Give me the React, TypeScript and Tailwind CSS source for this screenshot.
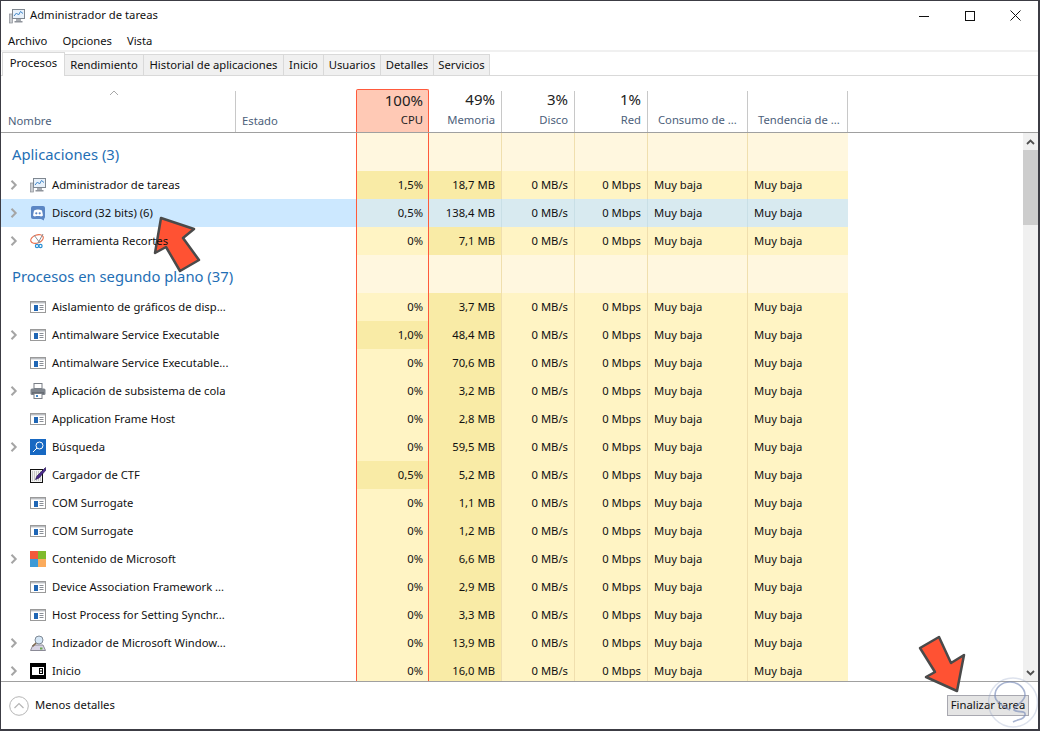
import { FC } from "react";

type Row = {
  name: string;
  icon: string;
  expand?: boolean;
  cpu: string;
  mem: string;
  cpuHot?: boolean;
  selected?: boolean;
};

const apps: Row[] = [
  { name: "Administrador de tareas", icon: "taskmgr", expand: true, cpu: "1,5%", mem: "18,7 MB", cpuHot: true },
  { name: "Discord (32 bits) (6)", icon: "discord", expand: true, cpu: "0,5%", mem: "138,4 MB", selected: true },
  { name: "Herramienta Recortes", icon: "snip", expand: true, cpu: "0%", mem: "7,1 MB" },
];

const background: Row[] = [
  { name: "Aislamiento de gráficos de disp...", icon: "proc", cpu: "0%", mem: "3,7 MB" },
  { name: "Antimalware Service Executable", icon: "proc", expand: true, cpu: "1,0%", mem: "48,4 MB", cpuHot: true },
  { name: "Antimalware Service Executable...", icon: "proc", cpu: "0%", mem: "70,6 MB" },
  { name: "Aplicación de subsistema de cola", icon: "printer", expand: true, cpu: "0%", mem: "3,2 MB" },
  { name: "Application Frame Host", icon: "proc", cpu: "0%", mem: "2,8 MB" },
  { name: "Búsqueda", icon: "search", expand: true, cpu: "0%", mem: "59,5 MB" },
  { name: "Cargador de CTF", icon: "ctf", cpu: "0,5%", mem: "5,2 MB", cpuHot: true },
  { name: "COM Surrogate", icon: "proc", cpu: "0%", mem: "1,1 MB" },
  { name: "COM Surrogate", icon: "proc", cpu: "0%", mem: "1,2 MB" },
  { name: "Contenido de Microsoft", icon: "ms", expand: true, cpu: "0%", mem: "6,6 MB" },
  { name: "Device Association Framework ...", icon: "proc", cpu: "0%", mem: "2,9 MB" },
  { name: "Host Process for Setting Synchr...", icon: "proc", cpu: "0%", mem: "3,3 MB" },
  { name: "Indizador de Microsoft Window...", icon: "indexer", expand: true, cpu: "0%", mem: "13,9 MB" },
  { name: "Inicio", icon: "start", expand: true, cpu: "0%", mem: "16,0 MB" },
];

const ProcIcon: FC<{ name: string }> = ({ name }) => {
  if (name === "discord")
    return (
      <svg width="16" height="16" viewBox="0 0 16 16">
        <rect x="1" y="1" width="14" height="13" rx="2" fill="#5b86c4" />
        <path d="M4 5.5 Q8 3.5 12 5.5 L13 10.5 Q11 12 10 11 L6 11 Q5 12 3 10.5Z" fill="#fff" />
        <circle cx="6.3" cy="8.3" r="1.1" fill="#5b86c4" />
        <circle cx="9.7" cy="8.3" r="1.1" fill="#5b86c4" />
        <path d="M11 14l3 1.5V13z" fill="#5b86c4" />
      </svg>
    );
  if (name === "taskmgr")
    return (
      <svg width="16" height="16" viewBox="0 0 16 16">
        <rect x="0.5" y="6" width="3" height="9" fill="#c9ccd0" stroke="#8a8f96" strokeWidth="0.7" />
        <rect x="3.5" y="1.5" width="12" height="9" fill="#e8f1fa" stroke="#7f8790" />
        <path d="M5 8l2.5-3 2 2 2-3.5 2.5 2" fill="none" stroke="#3f86c9" />
        <rect x="7" y="11" width="5" height="2" fill="#a9adb3" />
        <rect x="5.5" y="13" width="8" height="1.5" fill="#8f949b" />
      </svg>
    );
  if (name === "snip")
    return (
      <svg width="16" height="16" viewBox="0 0 16 16">
        <ellipse cx="7" cy="6" rx="6.5" ry="4" fill="#fff" stroke="#e8704e" strokeWidth="1.1" transform="rotate(-20 7 6)" />
        <path d="M4 2l6 8M13 1L8 10" stroke="#8a8f96" />
        <circle cx="10.5" cy="13" r="1.6" fill="none" stroke="#2a8fd4" strokeWidth="1.2" />
        <circle cx="7" cy="13" r="1.6" fill="none" stroke="#2a8fd4" strokeWidth="1.2" />
      </svg>
    );
  if (name === "printer")
    return (
      <svg width="16" height="16" viewBox="0 0 16 16">
        <rect x="4" y="0.5" width="8" height="5" fill="#fff" stroke="#7a7f86" />
        <rect x="0.5" y="5.5" width="15" height="6.5" rx="1.5" fill="#7f858d" />
        <rect x="2" y="9.5" width="12" height="1" fill="#50555c" />
        <rect x="4" y="10.5" width="8" height="5" fill="#fff" stroke="#7a7f86" />
        <rect x="6" y="12" width="2" height="2" fill="#3f86c9" />
      </svg>
    );
  if (name === "search")
    return (
      <svg width="16" height="16" viewBox="0 0 16 16">
        <rect width="16" height="16" fill="#1768c2" />
        <circle cx="9.5" cy="6.5" r="3.5" fill="none" stroke="#fff" />
        <path d="M7 9l-4 4" stroke="#fff" />
      </svg>
    );
  if (name === "ctf")
    return (
      <svg width="16" height="16" viewBox="0 0 16 16">
        <rect x="0.5" y="2.5" width="12" height="13" fill="#f2f2f2" stroke="#111" />
        <path d="M2 5h9M2 7h9M2 9h9M2 11h9M2 13h9" stroke="#9a9a9a" strokeDasharray="1 1" />
        <path d="M15.5 0.5L7 9l-1.5 3.5L9 11l7-8z" fill="#4b2a8c" stroke="#1d1145" strokeWidth="0.6" />
      </svg>
    );
  if (name === "ms")
    return (
      <svg width="16" height="16" viewBox="0 0 16 16">
        <rect width="8" height="8" fill="#f25a3c" />
        <rect x="8" width="8" height="8" fill="#7fba2c" />
        <rect y="8" width="8" height="8" fill="#3d9ad6" />
        <rect x="8" y="8" width="8" height="8" fill="#fbab5c" />
      </svg>
    );
  if (name === "indexer")
    return (
      <svg width="16" height="16" viewBox="0 0 16 16">
        <path d="M0.5 15.5L3 10h10l2.5 5.5z" fill="#d8d4e4" stroke="#8b8a96" />
        <rect x="10" y="12.5" width="2.5" height="2" fill="#6aa84f" />
        <circle cx="9" cy="5" r="4" fill="#d5e6f5" stroke="#7f8a96" />
        <path d="M6 8l-3.5 3.5" stroke="#7f6a50" strokeWidth="1.6" />
      </svg>
    );
  if (name === "start")
    return (
      <svg width="16" height="16" viewBox="0 0 16 16">
        <rect width="16" height="16" fill="#000" />
        <rect x="2" y="4" width="12" height="8" fill="#fff" />
        <rect x="9" y="5" width="4" height="6" fill="#000" />
        <path d="M10 6.5h2M10 8h2M10 9.5h2" stroke="#fff" />
      </svg>
    );
  return (
    <svg width="16" height="16" viewBox="0 0 16 16">
      <rect x="0.5" y="2.5" width="15" height="11" fill="#fff" stroke="#9a9a9a" />
      <rect x="1" y="3" width="14" height="1.4" fill="#b9bcc0" />
      <rect x="4" y="6" width="4" height="6" fill="#1f66b5" />
      <path d="M9.5 6.5h4M9.5 8.5h4M9.5 10.5h4" stroke="#8a8f96" />
    </svg>
  );
};

const Chevron: FC = () => (
  <svg width="8" height="10" viewBox="0 0 8 10" className="shrink-0">
    <path d="M1.5 0.7L5.7 5L1.5 9.3" fill="none" stroke="#a5a5a5" strokeWidth="2" />
  </svg>
);

const Cell: FC<{ bg: string; line: string; children?: React.ReactNode }> = ({ bg, line, children }) => (
  <div className={`w-[73px] ${bg} ${line} h-full shrink-0 flex items-center justify-end pr-[6px]`}>
    {children}
  </div>
);

const RowLine: FC<{ row: Row }> = ({ row }) => {
  const base = row.selected ? "bg-[#d8eaf0]" : "bg-[#fff4c4]";
  const hot = row.selected ? "bg-[#d8eaf0]" : "bg-[#f9eba6]";
  const line = row.selected ? "border-r border-r-[#c9dfe6]" : "border-r border-r-[#f0dfae]";
  return (
    <div className="flex h-[28px] text-[#111]">
      <div className={`w-[355px] shrink-0 flex items-center pl-[9px] ${row.selected ? "bg-[#cce8ff]" : ""}`}>
        <div className="w-[20px] shrink-0 flex">{row.expand && <Chevron />}</div>
        <div className="w-[22px] shrink-0 flex"><ProcIcon name={row.icon} /></div>
        <span className="relative z-10 whitespace-nowrap">{row.name}</span>
      </div>
      <div className={`w-[73px] h-full shrink-0 border-x border-x-[#ff5a3c] flex items-center justify-end pr-[5px] ${row.cpuHot ? hot : base}`}>{row.cpu}</div>
      <Cell bg={hot} line={line}>{row.mem}</Cell>
      <Cell bg={base} line={line}>0 MB/s</Cell>
      <Cell bg={base} line={line}>0 Mbps</Cell>
      <div className={`w-[100px] h-full shrink-0 flex items-center pl-[6px] ${base} ${line}`}>Muy baja</div>
      <div className={`w-[100px] h-full shrink-0 flex items-center pl-[6px] ${base}`}>Muy baja</div>
    </div>
  );
};

const Section: FC<{ title: string }> = ({ title }) => (
  <div className="flex h-[38px]">
    <div className="w-[355px] shrink-0 pl-[11px] pt-[4px] flex items-center text-[14.8px] text-[#1f6fb5]">{title}</div>
    <div className="w-[73px] h-full shrink-0 border-x border-x-[#ff5a3c] bg-[#fff7df]" />
    {["w-[73px]", "w-[73px]", "w-[73px]", "w-[100px]", "w-[100px]"].map((w, i) => (
      <div key={i} className={`${w} h-full shrink-0 bg-[#fff7df] ${i < 4 ? "border-r border-r-[#f0dfae]" : ""}`} />
    ))}
  </div>
);

const Head: FC<{ w: string; pct?: string; label: string; left?: boolean }> = ({ w, pct, label, left }) => (
  <div className={`${w} shrink-0 h-[41px] border-r border-[#c8c8c8] flex flex-col ${left ? "items-start pl-[10px]" : "items-end pr-[6px]"}`}>
    <span className="h-[16px] text-[15px] leading-[16px] text-[#222]">{pct}</span>
    <span className="mt-[5px] text-[#4c607a] leading-[16px]">{label}</span>
  </div>
);

export default function App() {
  const tabs = ["Rendimiento", "Historial de aplicaciones", "Inicio", "Usuarios", "Detalles", "Servicios"];
  const tabWidths = ["w-[79px]", "w-[140px]", "w-[40px]", "w-[57px]", "w-[53px]", "w-[56px]"];

  return (
    <div className="relative w-[1040px] h-[731px] overflow-hidden bg-white border-t border-l border-r-2 border-b-2 border-[#3c3c44] text-[11.25px] text-[#111]" style={{ fontFamily: '"Noto Sans", "Open Sans", sans-serif' }}>
      {/* title bar */}
      <div className="h-[29px] flex items-center pl-[8px]">
        <ProcIcon name="taskmgr" />
        <span className="ml-[5px]">Administrador de tareas</span>
        <div className="ml-auto flex items-center">
          <svg width="10" height="10" viewBox="0 0 10 10" className="mr-[36px]"><path d="M0 5.5h10" stroke="#111" /></svg>
          <svg width="10" height="10" viewBox="0 0 10 10" className="mr-[35px]"><rect x="0.5" y="0.5" width="9" height="9" fill="none" stroke="#111" /></svg>
          <svg width="11" height="11" viewBox="0 0 11 11" className="mr-[17px]"><path d="M0.5 0.5l10 10M10.5 0.5l-10 10" stroke="#111" /></svg>
        </div>
      </div>

      {/* menu */}
      <div className="h-[20px] flex items-center pl-[7px] pt-[2px] gap-[15px]">
        <span>Archivo</span>
        <span>Opciones</span>
        <span>Vista</span>
      </div>
      <div className="h-[2px] bg-[#f0f0f0]" />

      {/* tabs */}
      <div className="h-[24px] flex items-end pl-[1px] border-b border-[#d9d9d9]">
        <div className="w-[63px] h-[24px] -mb-px pb-[3px] bg-white border border-b-0 border-[#d9d9d9] flex items-center justify-center relative">Procesos</div>
        {tabs.map((t, i) => (
          <div key={t} className={`${tabWidths[i]} h-[21px] bg-[#f0f0f0] border-r border-t border-[#d9d9d9] flex items-center justify-center`}>{t}</div>
        ))}
      </div>

      {/* column headers */}
      <div className="h-[57px] flex items-end border-b border-[#a0a0a0]">
        <div className="w-[235px] shrink-0 h-[41px] border-r border-[#c8c8c8] relative flex items-end pl-[7px] pb-[2px] text-[#4c607a]">
          <svg width="10" height="6" viewBox="0 0 10 6" className="absolute left-[108px] top-[-1px]"><path d="M1 5l4-4 4 4" fill="none" stroke="#a8a8a8" /></svg>
          Nombre
        </div>
        <div className="w-[120px] shrink-0 h-[41px] flex items-end pl-[6px] pb-[2px] text-[#4c607a]">Estado</div>
        <div className="w-[73px] shrink-0 h-[43px] bg-[#ffc9b5] border-x border-t border-[#ff5a3c] rounded-t-[2px] flex flex-col items-end pr-[5px]">
          <span className="h-[20px] text-[15px] leading-[20px] text-[#222]">100%</span>
          <span className="mt-[2px] leading-[16px] text-[#222]">CPU</span>
        </div>
        <Head w="w-[73px]" pct="49%" label="Memoria" />
        <Head w="w-[73px]" pct="3%" label="Disco" />
        <Head w="w-[73px]" pct="1%" label="Red" />
        <Head w="w-[100px]" label="Consumo de ..." left />
        <Head w="w-[100px]" label="Tendencia de ..." left />
      </div>

      {/* process list */}
      <div className="h-[548px] flex overflow-hidden">
        <div className="w-[1022px] shrink-0 overflow-hidden">
          <Section title="Aplicaciones (3)" />
          {apps.map((r) => <RowLine key={r.name} row={r} />)}
          <Section title="Procesos en segundo plano (37)" />
          {background.map((r, i) => <RowLine key={i} row={r} />)}
        </div>
        <div className="w-[15px] shrink-0 bg-[#f0f0f0] flex flex-col">
          <div className="h-[17px] flex items-center justify-center">
            <svg width="9" height="6" viewBox="0 0 9 6"><path d="M1 5l3.5-3.5L8 5" fill="none" stroke="#505050" strokeWidth="1.8" /></svg>
          </div>
          <div className="h-[75px] bg-[#cdcdcd]" />
          <div className="flex-1" />
          <div className="h-[17px] flex items-center justify-center">
            <svg width="9" height="6" viewBox="0 0 9 6"><path d="M1 1l3.5 3.5L8 1" fill="none" stroke="#505050" strokeWidth="1.8" /></svg>
          </div>
        </div>
      </div>

      {/* footer */}
      <div className="h-[48px] border-t border-[#a0a0a0] flex items-center pl-[8px] pr-[9px]">
        <svg width="20" height="20" viewBox="0 0 20 20">
          <circle cx="10" cy="10" r="9.3" fill="none" stroke="#b5b5b5" />
          <path d="M5.5 12l4.5-4.5 4.5 4.5" fill="none" stroke="#b5b5b5" strokeWidth="1.2" />
        </svg>
        <span className="ml-[6px]">Menos detalles</span>
        <button className="ml-auto w-[82px] h-[21px] bg-[#e4e4e4] border border-[#a8a8b0]">Finalizar tarea</button>
      </div>

      {/* annotations */}
      <svg width="56" height="64" viewBox="0 0 56 64" className="absolute left-[149px] top-[211px]">
        <path d="M11 6L44 17L33 26L49 48L30 59L16 35L5 41Z" fill="#ff5233" stroke="#4a4a4a" strokeWidth="2.5" strokeLinejoin="round" />
      </svg>
      <svg width="56" height="64" viewBox="0 0 56 64" className="absolute left-[914px] top-[631px]">
        <path d="M5 16L24 5L36 31L49 23L42 59L11 45L20 40Z" fill="#ff5233" stroke="#4a4a4a" strokeWidth="2.5" strokeLinejoin="round" />
      </svg>
      <svg width="52" height="54" viewBox="0 0 52 54" className="absolute left-[987px] top-[676px]">
        <circle cx="25" cy="25.5" r="24.5" fill="none" stroke="#8f9fc4" strokeOpacity="0.3" strokeWidth="1.5" />
        <path d="M22 33C12 28 7 24 7 19C7 10 14 5 22 5C30 5 37 11 37 18C37 25 28 27 26 33C30 36 38 33 37 38C36 43 30 42 25 45" fill="none" stroke="#7a8cb8" strokeOpacity="0.65" strokeWidth="1.6" />
      </svg>
    </div>
  );
}
